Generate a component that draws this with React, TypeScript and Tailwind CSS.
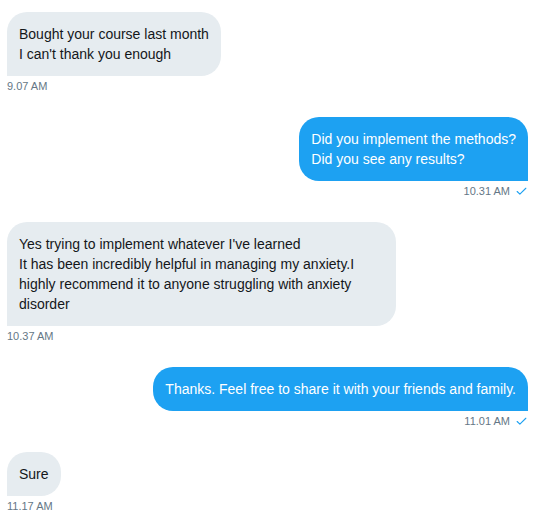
import { Check } from "lucide-react";

type Message = {
  text: string[];
  time: string;
  mine?: boolean;
};

const messages: Message[] = [
  { text: ["Bought your course last month", "I can't thank you enough"], time: "9.07 AM" },
  { text: ["Did you implement the methods?", "Did you see any results?"], time: "10.31 AM", mine: true },
  {
    text: [
      "Yes trying to implement whatever I've learned",
      "It has been incredibly helpful in managing my anxiety.I highly recommend it to anyone struggling with anxiety disorder",
    ],
    time: "10.37 AM",
  },
  { text: ["Thanks. Feel free to share it with your friends and family."], time: "11.01 AM", mine: true },
  { text: ["Sure"], time: "11.17 AM" },
];

export default function App() {
  return (
    <div className="flex min-h-[519px] w-[540px] flex-col gap-[23px] bg-white pb-2 pl-[7px] pr-[12px] pt-3 font-['Liberation_Sans',Arial,sans-serif]">
      {messages.map((msg) => (
        <div key={msg.time} className={`flex flex-col ${msg.mine ? "items-end" : "items-start"}`}>
          <div
            className={[
              "max-w-[389px] rounded-[20px] px-3 py-3 text-[14px] leading-5",
              msg.mine ? "rounded-br-none bg-[#1DA1F2] text-white" : "rounded-bl-none bg-[#E6ECF0] text-[#14171A]",
            ].join(" ")}
          >
            {msg.text.map((line) => (
              <div key={line}>{line}</div>
            ))}
          </div>
          <div className="mt-[2px] flex items-center gap-[5px] text-[11px] leading-4 text-[#657786]">
            <span>{msg.time}</span>
            {msg.mine ? <Check className="h-[13px] w-[13px] text-[#1DA1F2]" strokeWidth={2} /> : null}
          </div>
        </div>
      ))}
    </div>
  );
}
